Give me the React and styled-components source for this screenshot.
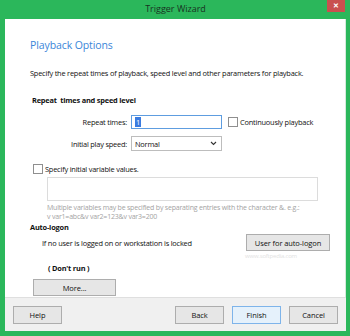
import React from "react"
import styled, { createGlobalStyle } from "styled-components"

const GlobalStyle = createGlobalStyle`
  html, body { margin: 0; padding: 0; }
  body { font-family: "Open Sans", "Noto Sans", sans-serif; }
`

const Colors = {
  green: "#2bb75b",
  red: "#c9504f",
  blue: "#3b86d9",
  text: "#111",
  hint: "#a3a3a3",
  border: "#adadad",
  footer: "#f0f0f0",
}

const Window = styled.div`
  width: 350px;
  height: 336px;
  box-sizing: border-box;
  background: ${Colors.green};
  padding: 0 4px 5px 5px;
  display: flex;
  flex-direction: column;
`

const TitleBar = styled.div`
  height: 19px;
  display: grid;
  grid-template-columns: 1fr auto 1fr;
  align-items: start;
`

const TitleText = styled.div`
  grid-column: 2;
  font-size: 9px;
  line-height: 18px;
  color: #183322;
`

const CloseButton = styled.div`
  grid-column: 3;
  justify-self: end;
  width: 18px;
  height: 12px;
  margin-right: 1px;
  background: ${Colors.red};
  color: #fff;
  font-size: 7px;
  font-weight: bold;
  line-height: 12px;
  text-align: center;
`

const Body = styled.div`
  flex: 1;
  background: #fff;
  padding: 18px 0 0 25px;
  color: ${Colors.text};
  font-size: 7.4px;
  letter-spacing: -0.2px;
  display: flex;
  flex-direction: column;
  border-right: 1px solid #d6e9dc;
`

const Heading = styled.div`
  color: ${Colors.blue};
  font-size: 10.5px;
  letter-spacing: -0.1px;
  line-height: 16px;
`

const Text = styled.div`
  line-height: 12px;
  margin-top: ${p => p.$top || 0}px;
  margin-left: ${p => p.$left || 0}px;
  font-weight: ${p => (p.$bold ? "bold" : "normal")};
`

const FormRow = styled.div`
  display: flex;
  align-items: center;
  margin-top: ${p => p.$top || 0}px;
  margin-left: ${p => p.$left || 0}px;
`

const Label = styled.label`
  width: 97px;
  text-align: right;
  padding-right: 4px;
  white-space: nowrap;
`

const Field = styled.div`
  width: 91px;
  height: ${p => p.$h || 14}px;
  box-sizing: border-box;
  border: 1px solid ${p => (p.$focus ? "#5e9de0" : "#bdbdbd")};
  display: flex;
  align-items: center;
  justify-content: space-between;
  padding: 0 4px 0 3px;
`

const Caret = styled.span`
  background: #3a7be0;
  color: #fff;
  line-height: 10px;
  padding: 0 1px;
`

const Chevron = styled.svg`
  width: 7px;
  height: 5px;
`

const Check = styled.span`
  width: 8px;
  height: 8px;
  border: 1px solid #8f8f8f;
  background: #fff;
  margin-right: 2px;
  flex-shrink: 0;
`

const TextArea = styled.div`
  width: 271px;
  height: 24px;
  box-sizing: border-box;
  border: 1px solid #dcdcdc;
  margin: 3px 0 0 17px;
`

const Hint = styled.div`
  color: ${Colors.hint};
  font-size: 7px;
  line-height: 9px;
  margin-left: 17px;
  margin-top: ${p => p.$top || 0}px;
`

const Button = styled.div`
  width: ${p => p.$w || 49}px;
  height: ${p => p.$h || 18}px;
  box-sizing: border-box;
  border: 1px solid ${p => (p.$default ? "#7eb4ea" : Colors.border)};
  background: ${p => (p.$default ? "#e5f1fb" : "#e6e6e6")};
  display: flex;
  align-items: center;
  justify-content: center;
  font-size: 7.5px;
  letter-spacing: -0.1px;
  color: ${Colors.text};
`

const AutoRow = styled.div`
  display: flex;
  align-items: center;
  justify-content: space-between;
  width: 288px;
  margin-top: 1px;
  margin-left: 12px;
`

const Watermark = styled.div`
  color: #e2e2e2;
  font-size: 6px;
  line-height: 7px;
  margin-left: 215px;
  margin-top: 2px;
`

const Footer = styled.div`
  height: 34px;
  background: ${Colors.footer};
  border-top: 1px solid #dfdfdf;
  box-sizing: border-box;
  display: flex;
  align-items: center;
  padding: 0 8px 0 8px;
  gap: 8px;
`

const Spacer = styled.div`
  flex: 1;
`

const App = () => {
  return (
    <>
      <GlobalStyle />
      <Window>
        <TitleBar>
          <TitleText>Trigger Wizard</TitleText>
          <CloseButton>✕</CloseButton>
        </TitleBar>
        <Body>
          <Heading>Playback Options</Heading>
          <Text $top={14}>Specify the repeat times of playback, speed level and other parameters for playback.</Text>
          <Text $top={15} $left={2} $bold>Repeat&nbsp; times and speed level</Text>
          <FormRow $top={9}>
            <Label>Repeat times:</Label>
            <Field $focus><Caret>1</Caret></Field>
            <Check style={{ marginLeft: 6 }} />
            Continuously playback
          </FormRow>
          <FormRow $top={7}>
            <Label>Initial play speed:</Label>
            <Field $h={15}>
              Normal
              <Chevron viewBox="0 0 7 5">
                <path d="M1 1 L3.5 3.5 L6 1" fill="none" stroke="#333" strokeWidth="1.1" />
              </Chevron>
            </Field>
          </FormRow>
          <FormRow $top={13} $left={3}>
            <Check />
            Specify initial variable values.
          </FormRow>
          <TextArea />
          <Hint $top={2}>Multiple variables may be specified by separating entries with the character &amp;. e.g.:</Hint>
          <Hint>v var1=abc&amp;v var2=123&amp;v var3=200</Hint>
          <Text $top={0} $bold>Auto-logon</Text>
          <AutoRow>
            If no user is logged on or workstation is locked
            <Button $w={84} $h={17}>User for auto-logon</Button>
          </AutoRow>
          <Watermark>www.softpedia.com</Watermark>
          <Text $top={2} $left={18} $bold>( Don't run )</Text>
          <FormRow $top={5} $left={3}>
            <Button $w={83} $h={17}>More...</Button>
          </FormRow>
        </Body>
        <Footer>
          <Button>Help</Button>
          <Spacer />
          <Button>Back</Button>
          <Button $default>Finish</Button>
          <Button>Cancel</Button>
        </Footer>
      </Window>
    </>
  )
}

export default App
